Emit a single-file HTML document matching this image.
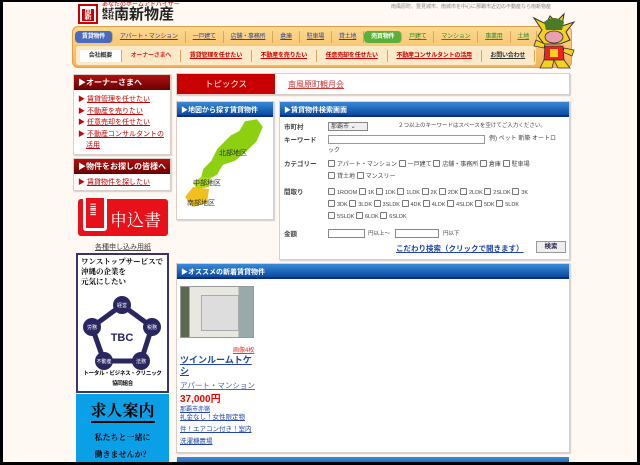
<!DOCTYPE html>
<html><head><meta charset="utf-8">
<style>
*{margin:0;padding:0;box-sizing:border-box}
body{width:640px;height:465px;background:#000;position:relative;overflow:hidden;font-family:"Liberation Sans","Noto Sans CJK JP",sans-serif;}
#pg{position:absolute;left:3px;top:2px;width:634px;height:460px;background:#fff8f3;overflow:hidden}
.a{position:absolute}
.s{font-size:7px;line-height:1}
.lnk{color:#c00;text-decoration:underline}
.blnk{color:#2244aa;text-decoration:underline}
.rh{background:linear-gradient(#b01010,#6a0000);color:#fff;font-size:8px;font-weight:bold;padding:2px 4px;height:15px}
.bh{background:linear-gradient(#3a8ad8,#0a4aa0);color:#fff;font-size:7px;font-weight:bold;padding:3px 4px;height:15px;border-bottom:2px solid #0a2f80}
.box{background:#fff;border:1px solid #d8d0c8;box-shadow:1px 1px 1px #ccc}
.nav{display:flex;white-space:nowrap}
.nav span{display:block;flex:auto;text-align:center;font-size:6px;padding:0 2px;border-right:1px solid #d9a860;line-height:12px;text-decoration:underline;letter-spacing:-0.2px}
.nav1 span{color:#334499}
.nav2 span{color:#c00;font-weight:bold}
.cb{display:inline-block;width:7px;height:7px;border:1px solid #777;border-radius:1px;vertical-align:-1px;margin-right:2px;background:#fff}
.frm{font-size:6.5px;color:#444;line-height:11px}
</style></head><body>
<div id="pg">
<div class="a" style="left:75px;top:2px;width:20px;height:20px;background:#fff;border:2px solid #c00;"><div style="background:#c00;color:#fff;font-size:7px;font-weight:bold;text-align:center;margin:3px 2px;line-height:6px">南<br>新</div></div>
<div class="a" style="left:99px;top:0px;font-size:6px;color:#c00;line-height:7px">あなたのホームアドバイザー</div>
<div class="a" style="left:99px;top:7px;font-size:6px;font-weight:bold;line-height:6px">株式<br>会社</div>
<div class="a" style="left:111px;top:5px;font-size:15px;font-weight:bold;color:#222;line-height:16px">南新物産</div>
<div class="a" style="left:388px;top:1px;font-size:5px;color:#888">南風原町、豊見城市、南城市を中心に那覇市近辺の不動産なら南新物産</div>
<div class="a" style="left:69px;top:24px;width:500px;height:42px;background:linear-gradient(#fbd990,#f3b458);border-radius:6px;border:1px solid #e0a04a"></div>
<div class="a" style="left:73px;top:44px;width:460px;height:19px;background:#fbe9c8;border-radius:3px"></div>
<div class="a nav nav1" style="left:72px;top:29px;width:462px"><span style="background:#4a6ac0;color:#fff;border-radius:4px;text-decoration:none;font-weight:bold">賃貸物件</span><span>アパート・マンション</span><span>一戸建て</span><span>店舗・事務所</span><span>倉庫</span><span>駐車場</span><span>貸土地</span><span style="background:#5ab03a;color:#fff;border-radius:4px;text-decoration:none;font-weight:bold">売買物件</span><span style="color:#2a8a2a">戸建て</span><span style="color:#2a8a2a">マンション</span><span style="color:#2a8a2a">事業用</span><span style="color:#2a8a2a">土地</span></div>
<div class="a nav nav2" style="left:77px;top:48px;width:455px"><span style="color:#333;text-decoration:none;background:#fff">会社概要</span><span style="color:#e22;text-decoration:none">オーナーさまへ</span><span>賃貸管理を任せたい</span><span>不動産を売りたい</span><span>任意売却を任せたい</span><span>不動産コンサルタントの活用</span><span style="color:#333">お問い合わせ</span></div>
<svg class="a" style="left:527px;top:8px" width="48" height="62" viewBox="0 0 48 62">
<path d="M4 8 L16 14 L20 6 L26 12 L34 4 L32 16 L44 12 L36 22 L40 30 L30 34 L14 34 L8 26 L12 20 Z" fill="#f5d020" stroke="#333" stroke-width="1"/>
<path d="M14 12 Q24 4 34 12 L32 20 L16 20Z" fill="#4a7a2a"/>
<ellipse cx="24" cy="27" rx="9" ry="6" fill="#e8a0b0" stroke="#333" stroke-width=".8"/>
<path d="M15 36 L33 36 L34 50 L14 50Z" fill="#e22" stroke="#333" stroke-width=".8"/>
<rect x="20" y="39" width="8" height="8" fill="#f5d020"/>
<path d="M14 50 L10 58 L22 58 L24 50 L28 58 L40 58 L34 50Z" fill="#f5d020" stroke="#333" stroke-width=".8"/>
<path d="M14 38 L4 36 L6 30 L15 34Z M34 38 L44 40 L42 46 L33 42Z" fill="#f5d020" stroke="#333" stroke-width=".8"/>
</svg>
<div class="a box" style="left:70px;top:72px;width:98px;height:81px">
<div class="rh">▶オーナーさまへ</div>
<div class="s" style="padding:4px 4px 0 4px;line-height:11.5px;font-size:7px">
<div><span style="color:#c00">▶</span> <span class="lnk">賃貸管理を任せたい</span></div>
<div><span style="color:#c00">▶</span> <span class="lnk">不動産を売りたい</span></div>
<div><span style="color:#c00">▶</span> <span class="lnk">任意売却を任せたい</span></div>
<div><span style="color:#c00">▶</span> <span class="lnk">不動産コンサルタントの</span></div>
<div style="padding-left:8px"><span class="lnk">活用</span></div>
</div></div>
<div class="a box" style="left:70px;top:156px;width:98px;height:33px">
<div class="rh">▶物件をお探しの皆様へ</div>
<div style="padding:3px 4px;font-size:7px"><span style="color:#c00">▶</span> <span class="lnk">賃貸物件を探したい</span></div></div>
<div class="a" style="left:75px;top:197px;width:90px;height:37px;background:#e8111a;border-radius:3px"></div>
<div class="a" style="left:80px;top:193px;width:24px;height:36px;border:3px solid #fff;border-radius:3px;background:#e8111a"></div>
<div class="a" style="left:87px;top:203px;width:12px;color:#fff;font-size:7px;line-height:6px;font-weight:bold">☰<br>☰</div>
<div class="a" style="left:107px;top:204px;color:#fff;font-size:17px;font-family:'Noto Serif CJK SC',serif">申込書</div>
<div class="a blnk" style="left:92px;top:240px;font-size:7px;color:#444">各種申し込み用紙</div>
<div class="a" style="left:73px;top:251px;width:93px;height:140px;background:#fff;border:2px solid #3a3468">
<div style="font-size:7.5px;font-weight:bold;line-height:10px;padding:2px 3px;font-family:'Noto Serif CJK SC',serif">ワンストップサービスで<br>沖縄の企業を<br>元気にしたい</div>
<svg width="89" height="90" viewBox="0 0 89 90" style="position:absolute;left:0;top:36px">
<polygon points="44,14 74,36 63,70 26,70 14,36" fill="none" stroke="#2a2660" stroke-width="5"/>
<circle cx="44" cy="14" r="9" fill="#2a2660"/><circle cx="74" cy="36" r="9" fill="#2a2660"/><circle cx="63" cy="70" r="9" fill="#2a2660"/><circle cx="26" cy="70" r="9" fill="#2a2660"/><circle cx="14" cy="36" r="9" fill="#2a2660"/>
<text x="44" y="16" font-size="5" fill="#fff" text-anchor="middle">経営</text><text x="74" y="38" font-size="5" fill="#fff" text-anchor="middle">税務</text><text x="63" y="72" font-size="5" fill="#fff" text-anchor="middle">法務</text><text x="26" y="72" font-size="5" fill="#fff" text-anchor="middle">不動産</text><text x="14" y="38" font-size="5" fill="#fff" text-anchor="middle">労務</text>
<text x="44" y="50" font-size="11" font-weight="bold" fill="#2a2660" text-anchor="middle">TBC</text>
</svg>
<div style="position:absolute;top:114px;left:0;width:89px;text-align:center;font-size:5.5px;font-weight:bold;line-height:10px;white-space:nowrap;letter-spacing:-0.3px">トータル・ビジネス・クリニック<br>協同組合</div>
</div>
<div class="a" style="left:73px;top:392px;width:93px;height:70px;background:#0aa0e8;text-align:center;font-family:'Noto Serif CJK SC',serif">
<div style="font-size:16px;font-weight:bold;margin-top:6px;line-height:20px">求人案内</div>
<div style="width:64px;height:2px;background:#000;margin:1px auto 6px"></div>
<div style="font-size:8px;font-weight:bold;line-height:17px">私たちと一緒に<br>働きませんか？</div></div>
<div class="a box" style="left:173px;top:71px;width:394px;height:22px"><div style="width:98px;height:20px;background:#c80000;color:#fff;font-size:8.5px;text-align:center;line-height:20px">トピックス</div>
<div class="a lnk" style="left:111px;top:5px;font-size:8px;color:#c33">南風原町観月会</div></div>
<div class="a box" style="left:173px;top:99px;width:98px;height:119px"><div class="bh">▶地図から探す賃貸物件</div>
<svg width="96" height="100" viewBox="0 0 96 100">
<path d="M68 4 L80 2 L86 10 L80 24 L70 34 L58 44 L46 48 L40 58 L32 62 L24 60 L26 52 L34 44 L40 32 L46 26 L54 18 L62 14 Z" fill="#8cd010" stroke="#fff" stroke-width=".5"/>
<path d="M24 60 L34 60 L32 70 L20 72 L16 66 Z" fill="#a8d818"/>
<path d="M16 70 L32 72 L30 86 L16 90 L8 80Z" fill="#f0c020"/>
<text x="42" y="38" font-size="7" fill="#333">北部地区</text>
<text x="16" y="68" font-size="7" fill="#333">中部地区</text>
<text x="10" y="88" font-size="7" fill="#333">南部地区</text>
</svg></div>
<div class="a box" style="left:276px;top:99px;width:291px;height:159px"><div class="bh">▶賃貸物件検索画面</div>
<div class="frm" style="position:relative;padding:3px 4px">
<div style="position:absolute;left:4px;top:5px;font-weight:bold">市町村</div>
<div style="position:absolute;left:48px;top:5px;width:40px;height:9px;border:1px solid #888;background:#eee;font-size:6px;line-height:8px;padding-left:2px">那覇市 ⌄</div>
<div style="position:absolute;left:118px;top:4px;font-size:5.5px">２つ以上のキーワードはスペースを空けてご入力ください。</div>
<div style="position:absolute;left:4px;top:18px;font-weight:bold">キーワード</div>
<div style="position:absolute;left:48px;top:18px;width:157px;height:9px;border:1px solid #999;background:#fff"></div>
<div style="position:absolute;left:209px;top:17px;font-size:6px">例) ペット 新築 オートロ</div>
<div style="position:absolute;left:48px;top:29px;font-size:6px">ック</div>
<div style="position:absolute;left:4px;top:42px;font-weight:bold">カテゴリー</div>
<div style="position:absolute;left:48px;top:42px;width:236px;font-size:6px;line-height:12px"><span class="cb"></span>アパート・マンション <span class="cb"></span>一戸建て <span class="cb"></span>店舗・事務所 <span class="cb"></span>倉庫 <span class="cb"></span>駐車場<br><span class="cb"></span>貸土地 <span class="cb"></span>マンスリー</div>
<div style="position:absolute;left:4px;top:70px;font-weight:bold">間取り</div>
<div style="position:absolute;left:48px;top:70px;width:238px;font-size:5.5px;line-height:12px"><span class="cb"></span>1ROOM <span class="cb"></span>1K <span class="cb"></span>1DK <span class="cb"></span>1LDK <span class="cb"></span>2K <span class="cb"></span>2DK <span class="cb"></span>2LDK <span class="cb"></span>2SLDK <span class="cb"></span>3K<br><span class="cb"></span>3DK <span class="cb"></span>3LDK <span class="cb"></span>3SLDK <span class="cb"></span>4DK <span class="cb"></span>4LDK <span class="cb"></span>4SLDK <span class="cb"></span>5DK <span class="cb"></span>5LDK<br><span class="cb"></span>5SLDK <span class="cb"></span>6LDK <span class="cb"></span>6SLDK</div>
<div style="position:absolute;left:4px;top:112px;font-weight:bold">金額</div>
<div style="position:absolute;left:48px;top:112px;width:37px;height:9px;border:1px solid #888;background:#fff"></div>
<div style="position:absolute;left:88px;top:112px;font-size:5.5px">円以上～</div>
<div style="position:absolute;left:115px;top:112px;width:44px;height:9px;border:1px solid #888;background:#fff"></div>
<div style="position:absolute;left:163px;top:112px;font-size:5.5px">円以下</div>
<div style="position:absolute;left:116px;top:126px;font-size:7.5px;color:#2244aa;text-decoration:underline;font-weight:bold">こだわり検索（クリックで開きます）</div>
<div style="position:absolute;left:256px;top:124px;width:30px;height:12px;border:1px solid #999;background:#eee;font-size:6.5px;text-align:center;line-height:10px;color:#224;font-weight:bold">検索</div>
</div></div>
<div class="a box" style="left:173px;top:261px;width:394px;height:190px"><div class="bh">▶オススメの新着賃貸物件</div>
<div style="position:absolute;left:3px;top:22px;width:74px;height:52px;background:linear-gradient(90deg,#5a6a50 0 12%,#e8e8e0 12% 80%,#9aa 80%);border:1px solid #999"><div style="position:absolute;left:20px;top:8px;width:38px;height:36px;background:#ddd;border:1px solid #aaa"></div></div>
<div style="position:absolute;left:56px;top:81px;font-size:6px;color:#e33;text-decoration:underline">画像4枚</div>
<div style="position:absolute;left:3px;top:91px;width:76px;font-size:9px;color:#2244aa;text-decoration:underline;font-weight:bold;line-height:11px">ツインルームトケシ</div>
<div style="position:absolute;left:3px;top:116px;font-size:7.5px;color:#4466bb;text-decoration:underline">アパート・マンション</div>
<div style="position:absolute;left:3px;top:126px;font-size:10px;color:#e00;font-weight:bold">37,000円</div>
<div style="position:absolute;left:3px;top:140px;font-size:6px;color:#2244aa;text-decoration:underline">那覇市赤嶺</div>
<div style="position:absolute;left:3px;top:148px;width:76px;font-size:6.5px;color:#2244aa;text-decoration:underline;line-height:12px">礼金なし！女性限定物件！エアコン付き！室内洗濯機置場</div>
</div>
<div class="a bh" style="left:174px;top:455px;width:392px"></div>
</div>
</body></html>
